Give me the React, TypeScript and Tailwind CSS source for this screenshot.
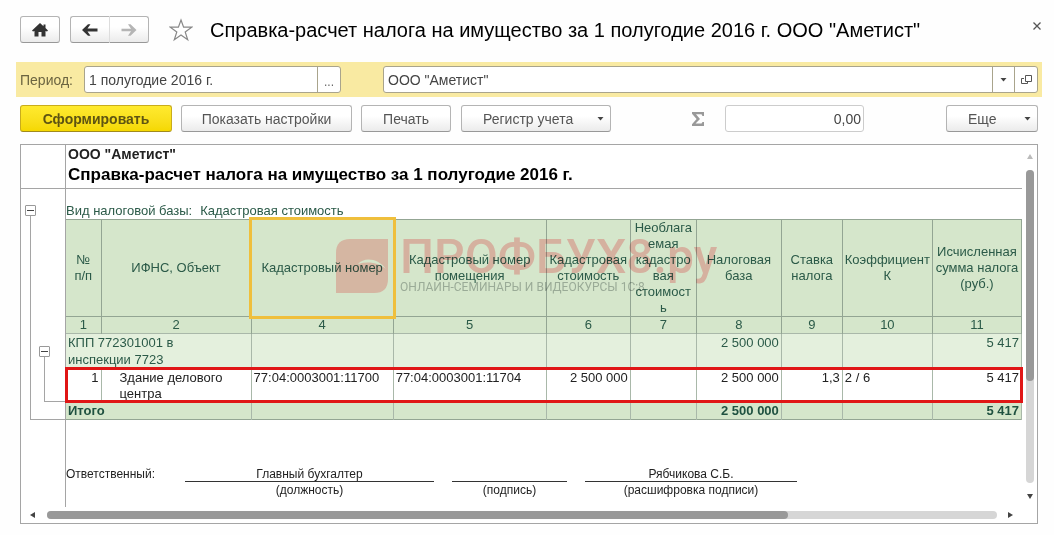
import React from 'react'

interface Column {
  num: string
  lines: string[]
  width: string
}

const columns: Column[] = [
  { num: '1', lines: ['№', 'п/п'], width: 'w-[35px]' },
  { num: '2', lines: ['ИФНС, Объект'], width: 'w-[150px]' },
  { num: '4', lines: ['Кадастровый номер'], width: 'w-[142px]' },
  { num: '5', lines: ['Кадастровый номер', 'помещения'], width: 'w-[153px]' },
  { num: '6', lines: ['Кадастровая', 'стоимость'], width: 'w-[84px]' },
  { num: '7', lines: ['Необлага', 'емая', 'кадастро', 'вая', 'стоимост', 'ь'], width: 'w-[66px]' },
  { num: '8', lines: ['Налоговая', 'база'], width: 'w-[85px]' },
  { num: '9', lines: ['Ставка', 'налога'], width: 'w-[61px]' },
  { num: '10', lines: ['Коэффициент', 'К'], width: 'w-[90px]' },
  { num: '11', lines: ['Исчисленная', 'сумма налога', '(руб.)'], width: 'w-[89px]' },
]

const buttonStyle =
  'h-[27px] rounded-[3px] border border-[#b4b4b4] border-b-[#989898] bg-gradient-to-b from-white from-40% to-[#ebebeb] text-sm text-[#555]'

const Caret: React.FC = () => (
  <svg width="7" height="4" viewBox="0 0 7 4" aria-hidden="true">
    <path d="M.5 0h6l-3 3.500z" fill="#444" />
  </svg>
)

const Collapse: React.FC<{ label: string }> = ({ label }) => (
  <button
    aria-label={label}
    className="flex h-[11px] w-[11px] items-center justify-center rounded-[1px] border border-[#999] bg-white"
  >
    <span className="h-px w-[7px] bg-[#444]" />
  </button>
)

const TopBar: React.FC = () => (
  <header className="flex h-[62px] items-start pt-4 pr-[7px] pl-5">
    <button aria-label="Домой" className={`${buttonStyle} flex w-10 items-center justify-center`}>
      <svg width="16" height="14" viewBox="0 0 16 14" fill="#333">
        <path d="M8 0 0 7.500l1 1 1.500-.5v5.500H6.500V9h3v4.500h4V8l1.500.5 1-1-2.500-2.400V1.500h-2v1.700z" />
      </svg>
    </button>
    <div className="ml-[10px] flex">
      <button aria-label="Назад" className={`${buttonStyle} flex w-10 items-center justify-center rounded-r-none border-r-[#ddd]`}>
        <svg width="16" height="12" viewBox="0 0 16 12" fill="#333">
          <path d="M0 6 6 .2h2.500L5.500 4.600H15.500v2.800H5.500L8.500 11.800H6z" />
        </svg>
      </button>
      <button aria-label="Вперед" className={`${buttonStyle} flex w-[39px] items-center justify-center rounded-l-none border-l-0`}>
        <svg width="16" height="12" viewBox="0 0 16 12" fill="#b5b5b5">
          <path d="M15.500 6 9.500.2H7l3 4.600H.5v2.400H10l-3 4.600h2.500z" />
        </svg>
      </button>
    </div>
    <button aria-label="В избранное" className="mt-0.5 ml-5">
      <svg width="24" height="24" viewBox="0 0 24 24" fill="#fff" stroke="#888" strokeWidth="1.200">
        <path d="m12 2 2.600 7.200h8.100l-6.500 4.800 2.500 7.800-6.700-4.800-6.700 4.800 2.500-7.800-6.500-4.800h8.100z" />
      </svg>
    </button>
    <h1 className="ml-[17px] flex-1 text-xl leading-7 whitespace-nowrap text-black">
      Справка-расчет налога на имущество за 1 полугодие 2016 г. ООО "Аметист"
    </h1>
    <button aria-label="Закрыть" className="flex h-5 w-5 items-center justify-center">
      <svg width="8" height="8" viewBox="0 0 8 8" stroke="#555" strokeWidth="1.300">
        <path d="m.5.5 7 7m0-7-7 7" />
      </svg>
    </button>
  </header>
)

const Filters: React.FC = () => (
  <div className="mr-3 ml-4 flex h-[35px] items-center bg-[#f9eaa2] pr-1 pl-1 text-sm text-[#444]">
    <label htmlFor="period" className="w-16 text-[#6b6440]">Период:</label>
    <div className="flex h-[27px] w-[257px] rounded-[3px] border border-[#a9a48c] bg-white">
      <input id="period" defaultValue="1 полугодие 2016 г." className="min-w-0 flex-1 px-1 outline-none" />
      <button aria-label="Выбрать период" className="w-[23px] border-l border-[#a9a48c] pt-1 text-xs text-[#666]">...</button>
    </div>
    <div className="ml-[42px] flex h-[27px] flex-1 rounded-[3px] border border-[#a9a48c] bg-white">
      <input aria-label="Организация" defaultValue={'ООО "Аметист"'} className="min-w-0 flex-1 px-1 outline-none" />
      <button aria-label="Список" className="flex w-[22px] items-center justify-center border-l border-[#a9a48c]">
        <Caret />
      </button>
      <button aria-label="Открыть" className="flex w-[23px] items-center justify-center border-l border-[#a9a48c]">
        <svg width="11" height="11" viewBox="0 0 11 11" fill="none" stroke="#555">
          <path d="M4.500 1.500h6v6h-6zM3 4.500H.5v5h6V8" />
        </svg>
      </button>
    </div>
  </div>
)

const Toolbar: React.FC = () => (
  <div className="flex h-[47px] items-start pt-2 pr-4 pl-5">
    <button className="h-[27px] w-[152px] rounded-[3px] border border-[#c9ac1c] border-b-[#a08a1c] bg-gradient-to-b from-[#ffea2e] to-[#f5d800] text-sm font-bold text-[#5e5412]">
      Сформировать
    </button>
    <button className={`${buttonStyle} ml-[9px] w-[171px]`}>Показать настройки</button>
    <button className={`${buttonStyle} ml-[9px] w-[90px]`}>Печать</button>
    <button aria-haspopup="menu" className={`${buttonStyle} ml-[10px] flex w-[150px] items-center justify-between pr-[6px] pl-[21px]`}>
      Регистр учета
      <Caret />
    </button>
    <div className="ml-20 flex h-[27px] items-center">
      <svg width="14" height="14" viewBox="0 0 14 14" fill="#999">
        <path d="M1 0h12v4h-1.500L10.500 2.200H5L9 7l-4.500 4.600h6L11.500 10H13v4H1v-1.800L5.600 7 1 1.800z" />
      </svg>
    </div>
    <input
      aria-label="Сумма"
      readOnly
      value="0,00"
      className="ml-5 h-[27px] w-[139px] rounded-[3px] border border-[#ccc] bg-white px-[2px] text-right text-sm text-[#444]"
    />
    <button aria-haspopup="menu" className={`${buttonStyle} ml-auto flex w-[92px] items-center justify-between pr-[6px] pl-[21px]`}>
      Еще
      <Caret />
    </button>
  </div>
)

const ReportTable: React.FC = () => (
  <table className="w-full table-fixed border-collapse text-[13px] text-[#2b5a48] [&_td]:border-r [&_td]:border-[#a9b8a9] [&_th]:border-r [&_th]:border-[#93a593]">
    <colgroup>
      {columns.map((c) => <col key={c.num} className={c.width} />)}
    </colgroup>
    <thead className="bg-[#d5e6cb]">
      <tr className="h-[97px] border-y border-[#93a593] leading-4">
        {columns.map((c) => (
          <th key={c.num} className="relative p-0 font-normal whitespace-nowrap">
            {c.lines.map((l) => <div key={l}>{l}</div>)}
            {c.num === '4' && (
              <span className="absolute -inset-[3px] z-10 border-3 border-[#efbf3c]" />
            )}
          </th>
        ))}
      </tr>
      <tr className="h-[17px] border-b border-[#a9b8a9] leading-4">
        {columns.map((c) => <th key={c.num} className="p-0 font-normal">{c.num}</th>)}
      </tr>
    </thead>
    <tbody className="[&_td]:px-[2px] [&_td]:py-0 [&_td]:align-top">
      <tr className="h-[34px] bg-[#e4f0dd] leading-[17px]">
        <td colSpan={2}>КПП 772301001 в<br />инспекции 7723</td>
        <td /><td /><td /><td />
        <td className="text-right">2 500 000</td>
        <td /><td />
        <td className="text-right">5 417</td>
      </tr>
      <tr className="h-[34px] bg-white leading-4 text-[#222] outline-3 -outline-offset-2 outline-[#e01616] [&_td]:pt-[2px]">
        <td className="text-right">1</td>
        <td><div className="pl-4">Здание делового<br />центра</div></td>
        <td>77:04:0003001:11700</td>
        <td>77:04:0003001:11704</td>
        <td className="text-right">2 500 000</td>
        <td />
        <td className="text-right">2 500 000</td>
        <td className="text-right">1,3</td>
        <td>2 / 6</td>
        <td className="text-right">5 417</td>
      </tr>
      <tr className="h-[17px] border-b border-[#93a593] bg-[#d5e6cb] leading-[17px] font-bold text-[#1f5140]">
        <td colSpan={2}>Итого</td>
        <td /><td /><td /><td />
        <td className="text-right">2 500 000</td>
        <td /><td />
        <td className="text-right">5 417</td>
      </tr>
    </tbody>
  </table>
)

const Watermark: React.FC = () => (
  <div className="pointer-events-none absolute top-4 left-[270px] flex items-start gap-3 mix-blend-multiply" aria-hidden="true">
    <svg width="52" height="54" viewBox="0 0 52 54" className="mt-1">
      <path d="M14 0h38v40q0 14-14 14H0V14Q0 0 14 0z" fill="#ffcacc" />
      <path d="M22 25c6-7 20-6 28 5-7-6-17-8-28-5z" fill="#fff" />
    </svg>
    <div className="whitespace-nowrap">
      <div className="font-['Roboto'] text-5xl leading-[44px] font-medium text-[#ffc4c8]">ПРОФБУХ8.ру</div>
      <div className="font-['Roboto'] text-xs leading-4 text-[#b9bebe]">ОНЛАЙН-СЕМИНАРЫ И ВИДЕОКУРСЫ 1С:8</div>
    </div>
  </div>
)

const Signatures: React.FC = () => (
  <div className="mt-[46px] flex text-xs leading-4 text-[#222]">
    <div className="w-[119px]">Ответственный:</div>
    <div className="w-[249px] text-center">
      <div className="h-4 border-b border-[#333]">Главный бухгалтер</div>
      (должность)
    </div>
    <div className="ml-[18px] w-[115px] text-center">
      <div className="h-4 border-b border-[#333]" />
      (подпись)
    </div>
    <div className="ml-[18px] w-[212px] text-center">
      <div className="h-4 border-b border-[#333]">Рябчикова С.Б.</div>
      (расшифровка подписи)
    </div>
  </div>
)

const Report: React.FC = () => (
  <main className="mr-4 ml-5 border border-[#a5a5a5] bg-white">
    <div className="flex">
      <div className="min-w-0 flex-1">
        <div className="flex h-11 border-b border-[#a5a5a5]">
          <div className="w-[45px] border-r border-[#a5a5a5]" />
          <div className="pl-0.5 font-bold whitespace-nowrap">
            <div className="text-sm leading-[18px] text-[#222]">ООО "Аметист"</div>
            <h2 className="text-[17px] leading-[23px] text-black">
              Справка-расчет налога на имущество за 1 полугодие 2016 г.
            </h2>
          </div>
        </div>
        <div className="flex h-[318px]">
          {/* дерево группировок */}
          <div className="w-[45px] shrink-0 border-r border-[#a5a5a5] pt-4 pl-1">
            <Collapse label="Свернуть отчет" />
            <div className="ml-[5px] h-[204px] border-b border-l border-[#a5a5a5] pt-[130px] pl-2">
              <Collapse label="Свернуть инспекцию" />
              <div className="ml-[5px] h-[45px] border-b border-l border-[#a5a5a5]" />
            </div>
          </div>
          <div className="min-w-0 flex-1">
            <div className="flex h-[30px] items-end gap-2 text-[13px] leading-4 text-[#2b5a48]">
              <span>Вид налоговой базы:</span>
              <span>Кадастровая стоимость</span>
            </div>
            <div className="relative">
              <ReportTable />
              <Watermark />
            </div>
            <Signatures />
          </div>
        </div>
      </div>
      <div className="flex w-[15px] flex-col items-center pt-[9px]">
        <svg width="6" height="5" viewBox="0 0 6 5"><path d="M3 0l3 5H0z" fill="#bbb" /></svg>
        <div className="mt-[11px] h-[313px] w-2 rounded-full bg-[#d6d6d6]">
          <div className="h-[211px] rounded-full bg-[#999]" />
        </div>
        <svg className="mt-[11px]" width="6" height="5" viewBox="0 0 6 5"><path d="M0 0h6L3 5z" fill="#444" /></svg>
      </div>
    </div>
    <div className="flex h-4 items-center pr-6 pl-[9px]">
      <svg width="5" height="6" viewBox="0 0 5 6"><path d="M5 0v6L0 3z" fill="#444" /></svg>
      <div className="mr-[11px] ml-3 h-2 flex-1 rounded-full bg-[#d6d6d6]">
        <div className="h-2 w-[78%] rounded-full bg-[#999]" />
      </div>
      <svg width="5" height="6" viewBox="0 0 5 6"><path d="M0 0v6l5-3z" fill="#444" /></svg>
    </div>
  </main>
)

const App: React.FC = () => {
  return (
    <div className="min-h-screen bg-[#fefefe] font-['Liberation_Sans',Arial,sans-serif]">
      <TopBar />
      <Filters />
      <Toolbar />
      <Report />
    </div>
  )
}

export default App
